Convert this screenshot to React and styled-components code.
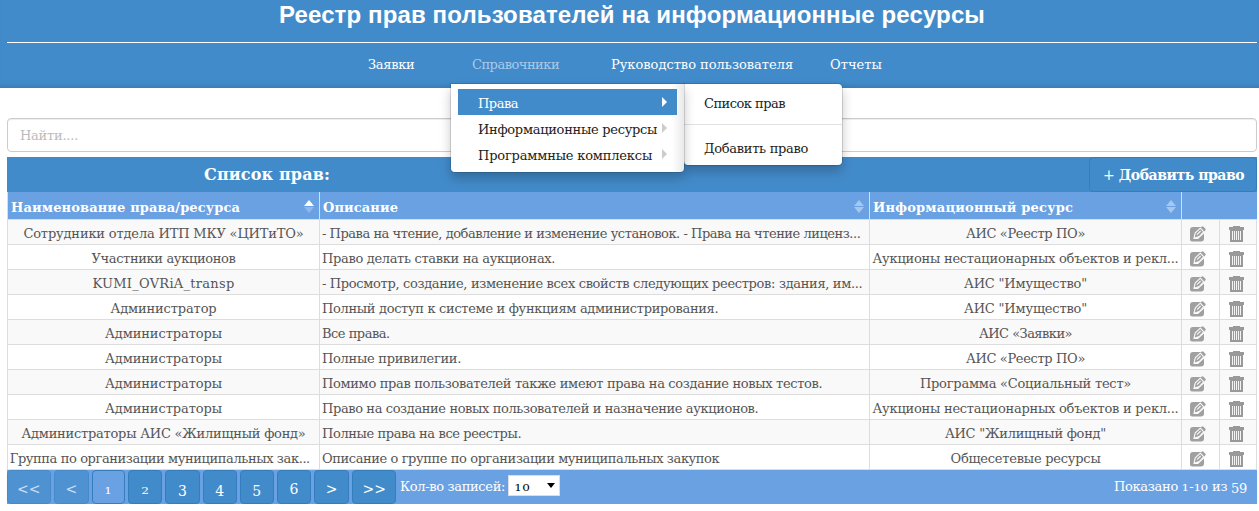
import React from 'react';
import styled, { createGlobalStyle } from 'styled-components';

const Global = createGlobalStyle`
  * { box-sizing: border-box; }
  body { margin: 0; background: #fff; color: #555; font-family: "DejaVu Serif", serif; font-size: 13px; }
`;

const Text = styled.span`
  display: inline-block;
  white-space: pre;
  letter-spacing: ${p => p.$ls || 0}px;
`;

const Header = styled.header`
  height: 88px;
  padding: 0 2px 0 7px;
  background: #428bca;
  box-shadow: inset 0 -5px 5px -3px rgba(0, 0, 0, 0.12);
  color: #fff;
`;
const Title = styled.h1`
  margin: 0;
  height: 43px;
  padding-top: 1px;
  border-bottom: 1px solid #fff;
  font: bold 24px/28px "Liberation Sans", Arial, sans-serif;
  text-align: center;
`;
const Nav = styled.nav`
  position: relative;
  display: flex;
  padding: 12px 0 0 361px;
  line-height: 20px;
`;
const NavItem = styled.a`
  width: ${p => p.$w}px;
  color: ${p => (p.$open ? '#a9c9e8' : '#fff')};
`;

const Menu = styled.div`
  position: absolute;
  z-index: ${p => (p.$sub ? 1 : 2)};
  left: ${p => p.$x}px;
  top: 41px;
  width: ${p => p.$w}px;
  height: ${p => p.$h}px;
  padding: 5px 0;
  background: #fff;
  border-radius: ${p => (p.$sub ? '0 4px 4px 4px' : '0 0 4px 4px')};
  box-shadow: 0 0 0 1px rgba(0, 0, 0, 0.13), 0 6px 12px rgba(0, 0, 0, 0.24);
  color: #222;
  ${p => !p.$sub && 'background: linear-gradient(to left, #e9e9e9 0, #fff 12px);'}
`;
const MenuItem = styled.div`
  display: flex;
  align-items: center;
  justify-content: space-between;
  height: 26px;
  margin: 0 7px;
  padding: 3px 10px 0 20px;
  line-height: 24px;
  background: ${p => (p.$active ? '#428bca' : 'transparent')};
  color: ${p => (p.$active ? '#fff' : 'inherit')};
`;
const Caret = styled.i`
  flex: none;
  margin-top: -3px;
  border: 5px solid transparent;
  border-left-color: ${p => (p.$active ? '#fff' : '#ccc')};
  border-right: 0;
`;
const SubItem = styled.div`
  height: 30px;
  padding-left: 20px;
  line-height: 30px;
`;
const Divider = styled.div`
  height: 1px;
  margin: 5px 0 9px;
  background: #e2e2e2;
`;

const Main = styled.main`
  padding: 30px 2px 0 7px;
`;
const Search = styled.div`
  height: 34px;
  margin-bottom: 5px;
  padding-left: 12px;
  border: 1px solid #ccc;
  border-radius: 4px;
  box-shadow: inset 0 1px 1px rgba(0, 0, 0, 0.075);
  line-height: 33px;
  color: #bbb;
`;
const Caption = styled.div`
  display: flex;
  justify-content: space-between;
  height: 35px;
  padding-left: 197px;
  background: #428bca;
  color: #fff;
  font-weight: bold;
  font-size: 16px;
  line-height: 35px;
`;
const AddButton = styled.div`
  width: 168px;
  border: 1px solid #357ebd;
  border-radius: 4px;
  font-size: 14px;
  line-height: 34px;
  padding-left: 13px;
`;
const Plus = styled.span`
  font-weight: normal;
`;

const Grid = styled.div`
  display: grid;
  grid-template-columns: 312px 550px 312px 38px 38px;
`;
const Head = styled.div`
  display: flex;
  align-items: center;
  justify-content: space-between;
  height: 27px;
  padding: 3px 5px 0 3px;
  grid-column: span ${p => p.$span || 1};
  border-left: 1px solid #ddd;
  background: #6aa1e2;
  color: #fff;
  font-weight: bold;
`;
const Sort = styled.span`
  display: flex;
  flex-direction: column;
  gap: 1px;
  margin-top: -1px;
  &::before, &::after { content: ''; border: 5px solid transparent; }
  &::before { border-top: 0; border-bottom: 6px solid ${p => (p.$up ? '#fff' : '#a6c7ee')}; }
  &::after { border-bottom: 0; border-top: 6px solid ${p => (p.$up ? '#8fb8ea' : '#a6c7ee')}; }
`;
const Cell = styled.div`
  display: flex;
  align-items: center;
  justify-content: ${p => (p.$left ? 'flex-start' : 'center')};
  height: 25px;
  padding: 2px 2px 0;
  overflow: hidden;
  border: 0 solid #ddd;
  border-top-width: 1px;
  border-left-width: 1px;
  border-right-width: ${p => (p.$last ? 1 : 0)}px;
  background: ${p => (p.$odd ? '#f9f9f9' : '#fff')};
`;
const IconCell = styled(Cell)`
  padding: 4px ${p => (p.$last ? 4 : 6)}px 0 0;
`;

const Footer = styled.div`
  display: flex;
  height: 35px;
  padding-right: 10px;
  border-top: 1px solid #ddd;
  background: #6aa1e2;
  box-shadow: 0 1px 2px rgba(0, 0, 0, 0.06);
  color: #fff;
`;
const Pages = styled.div`
  display: flex;
  gap: 3px;
  width: 389px;
  margin-right: 4px;
`;
const Page = styled.div`
  flex: ${p => p.$w} 0 0;
  height: 34px;
  border: 1px solid #357ebd;
  border-radius: 4px;
  background: ${p => (p.$on ? '#6aa1e2' : '#428bca')};
  opacity: ${p => (p.$off ? 0.65 : 1)};
  text-align: center;
  font-size: 14px;
  line-height: 36px;
`;
const Low = styled.span`
  display: inline-block;
  line-height: 1;
  font-size: 10px;
  transform: scaleX(1.2);
  margin: 0 0.7px;
`;
const Drop = styled.span`
  position: relative;
  top: 2px;
`;
const Label = styled.div`
  line-height: 34px;
`;
const Select = styled.div`
  display: flex;
  align-items: center;
  justify-content: space-between;
  width: 52px;
  height: 21px;
  margin: 5px auto 0 3px;
  padding: 2px 4px 0 5px;
  border: 1px solid #ddd;
  background: #fff;
  color: #000;
  &::after { content: ''; margin-top: -3px; border: 4px solid transparent; border-top: 5px solid #000; border-bottom: 0; }
`;

/* Old-style figures: 0-2 sit at x-height, 3, 4, 5, 7 and 9 hang below the baseline. */
const Figures = ({ children }) =>
  [...children].map((c, i) =>
    '012'.includes(c) ? <Low key={i}>{c}</Low> : '34579'.includes(c) ? <Drop key={i}>{c}</Drop> : c
  );

const Edit = () => (
  <svg width="16" height="16" viewBox="0 0 16 16">
    <path d="M3 1h8L4 9v4h4l6-5.500V12.500a3 3 0 0 1-3 3H2a2 2 0 0 1-2-2V4a3 3 0 0 1 3-3z" fill="#a0a0a0" />
    <path d="M3.900 12.200l1.200-5.500L11.500.8q1-1 2 0l1.700 1.600q1 1 0 2L9.200 10.600z" fill="#a0a0a0" />
    <path d="M10.300 2.200L5.300 6.800 4 12.200l5.200-1.600 4.500-4.600M10.300 2.200l3.500 3.600M7 8.600l3.600-3.600" fill="none" stroke="#f8f8f8" strokeWidth="1.100" />
  </svg>
);
const Trash = () => (
  <svg width="15" height="16" viewBox="0 0 15 16">
    <path d="M4 0h7v1h4v3H0V1h4zM1 4h13v12H1z" fill="#999" />
    <path d="M3.500 5v9M5.500 5v9M7.500 5v9M9.500 5v9M11.500 5v9" stroke="#f4f4f4" strokeWidth="1" />
  </svg>
);

const rows = [
  ['Сотрудники отдела ИТП МКУ «ЦИТиТО»', -0.162, '- Права на чтение, добавление и изменение установок. - Права на чтение лиценз...', -0.464, 'АИС «Реестр ПО»', -0.344],
  ['Участники аукционов', -0.347, 'Право делать ставки на аукционах.', -0.33, 'Аукционы нестационарных объектов и рекл...', -0.24],
  ['KUMI_OVRiA_transp', 0.28, '- Просмотр, создание, изменение всех свойств следующих реестров: здания, им...', -0.335, 'АИС "Имущество"', -0.177],
  ['Администратор', -0.137, 'Полный доступ к системе и функциям администрирования.', -0.322, 'АИС "Имущество"', -0.177],
  ['Администраторы', -0.08, 'Все права.', -0.5, 'АИС «Заявки»', -0.524],
  ['Администраторы', -0.08, 'Полные привилегии.', -0.28, 'АИС «Реестр ПО»', -0.344],
  ['Администраторы', -0.08, 'Помимо прав пользователей также имеют права на создание новых тестов.', -0.335, 'Программа «Социальный тест»', -0.233],
  ['Администраторы', -0.08, 'Право на создание новых пользователей и назначение аукционов.', -0.387, 'Аукционы нестационарных объектов и рекл...', -0.24],
  ['Администраторы АИС «Жилищный фонд»', -0.238, 'Полные права на все реестры.', -0.393, 'АИС "Жилищный фонд"', -0.257],
  ['Группа по организации муниципальных зак...  ', -0.396, 'Описание о группе по организации муниципальных закупок', -0.402, 'Общесетевые ресурсы', -0.234],
];
const pages = [['<<', 44, 'off'], ['<', 35, 'off'], ['1', 33, 'on'], ['2', 34], ['3', 34], ['4', 34], ['5', 34], ['6', 34], ['>', 35], ['>>', 44]];

export default function App() {
  return (
    <>
      <Global />
      <Header>
        <Title><Text $ls={0.122}>Реестр прав пользователей на информационные ресурсы</Text></Title>
        <Nav>
          <NavItem $w={104}><Text $ls={-0.3}>Заявки</Text></NavItem>
          <NavItem $w={139} $open><Text $ls={-0.5}>Справочники</Text></NavItem>
          <NavItem $w={219}><Text $ls={-0.012}>Руководство пользователя</Text></NavItem>
          <NavItem $w={60}><Text $ls={0.055}>Отчеты</Text></NavItem>
          <Menu $x={444} $w={233} $h={88}>
            <MenuItem $active><Text $ls={-0.492}>Права</Text><Caret $active /></MenuItem>
            <MenuItem><Text $ls={-0.289}>Информационные ресурсы</Text><Caret /></MenuItem>
            <MenuItem><Text $ls={-0.18}>Программные комплексы</Text><Caret /></MenuItem>
          </Menu>
          <Menu $sub $x={677} $w={158} $h={81}>
            <SubItem><Text $ls={-0.515}>Список прав</Text></SubItem>
            <Divider />
            <SubItem><Text $ls={-0.297}>Добавить право</Text></SubItem>
          </Menu>
        </Nav>
      </Header>
      <Main>
        <Search><Text $ls={-0.233}>Найти....</Text></Search>
        <Caption>
          <Text $ls={0.16}>Список прав:</Text>
          <AddButton><Text $ls={-0.44}><Plus>+</Plus> Добавить право</Text></AddButton>
        </Caption>
        <Grid>
          <Head><Text $ls={0.127}>Наименование права/ресурса</Text><Sort $up /></Head>
          <Head><Text $ls={0.096}>Описание</Text><Sort /></Head>
          <Head><Text $ls={0.206}>Информационный ресурс</Text><Sort /></Head>
          <Head $span={2} />
          {rows.map(([name, nameLs, about, aboutLs, source, sourceLs], i) => {
            const odd = i % 2 === 0;
            return (
              <React.Fragment key={i}>
                <Cell $odd={odd}><Text $ls={nameLs}>{name}</Text></Cell>
                <Cell $odd={odd} $left><Text $ls={aboutLs}>{about}</Text></Cell>
                <Cell $odd={odd}><Text $ls={sourceLs}>{source}</Text></Cell>
                <IconCell $odd={odd}><Edit /></IconCell>
                <IconCell $odd={odd} $last><Trash /></IconCell>
              </React.Fragment>
            );
          })}
        </Grid>
        <Footer>
          <Pages>
            {pages.map(([label, w, state]) => (
              <Page key={label} $w={w} $on={state === 'on'} $off={state === 'off'}><Figures>{label}</Figures></Page>
            ))}
          </Pages>
          <Label><Text $ls={-0.33}>Кол-во записей:</Text></Label>
          <Select><span><Figures>10</Figures></span></Select>
          <Label><Text $ls={-0.3}>Показано <Figures>1-10</Figures> из <Figures>59</Figures></Text></Label>
        </Footer>
      </Main>
    </>
  );
}
